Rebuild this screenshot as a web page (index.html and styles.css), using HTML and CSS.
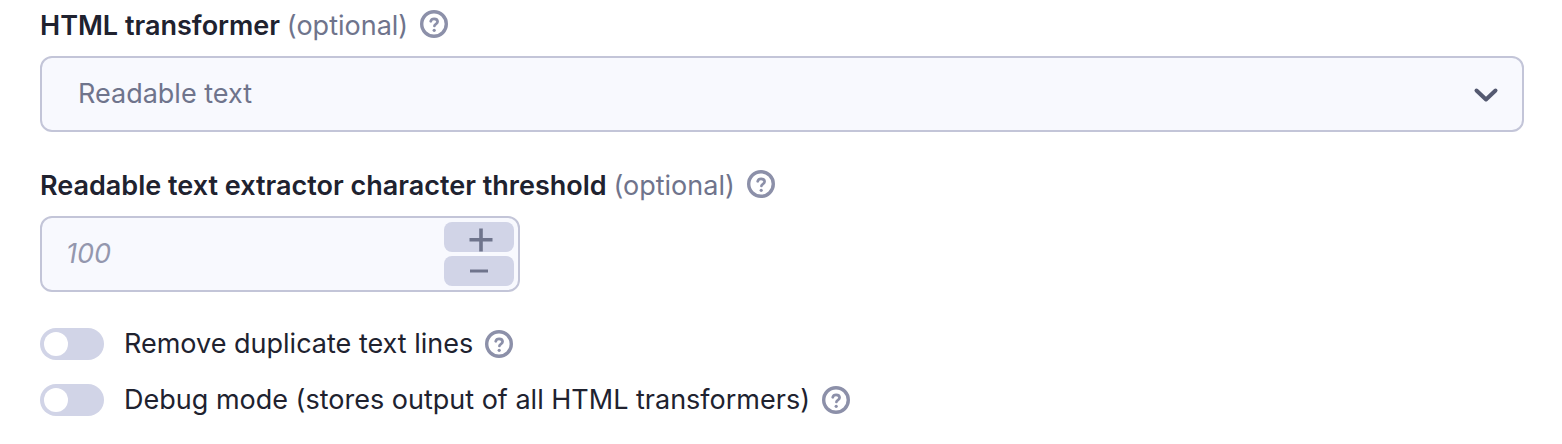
FILE: index.html
```html
<!DOCTYPE html>
<html lang="en">
<head>
    <meta charset="UTF-8">
    <meta name="viewport" content="width=device-width, initial-scale=1.0">
    <title>HTML transformer settings</title>
    <link rel="stylesheet" href="styles.css">
</head>
<body>

    <svg class="sprite" aria-hidden="true">
        <symbol id="help" viewBox="0 0 28 28">
            <circle cx="14" cy="14" r="12.3" fill="none" stroke="currentColor" stroke-width="3.4"/>
            <path d="M10.7 11.3c.4-1.5 1.7-2.4 3.4-2.4 2 0 3.5 1.2 3.5 2.9 0 2.3-3.2 2.3-3.2 4.2" fill="none" stroke="currentColor" stroke-width="2.7" stroke-linecap="round"/>
            <circle cx="14.2" cy="20.3" r="1.6" fill="currentColor"/>
        </symbol>
    </svg>

    <form class="settings">
        <div class="field">
            <div class="field-label">
                <label for="transformer">HTML transformer <span class="optional">(optional)</span></label>
                <button type="button" class="help" aria-label="About HTML transformer"><svg><use href="#help"/></svg></button>
            </div>
            <div class="select-wrap">
                <select id="transformer" name="transformer">
                    <option>Readable text</option>
                </select>
                <svg class="chevron" viewBox="0 0 26 16" aria-hidden="true"><path d="M3.5 3.5l9.5 9 9.5-9"/></svg>
            </div>
        </div>

        <div class="field">
            <div class="field-label">
                <label for="threshold">Readable text extractor character threshold <span class="optional">(optional)</span></label>
                <button type="button" class="help" aria-label="About character threshold"><svg><use href="#help"/></svg></button>
            </div>
            <div class="number">
                <input type="text" inputmode="numeric" id="threshold" name="threshold" placeholder="100">
                <div class="steps">
                    <button type="button" aria-label="Increase"><svg viewBox="0 0 30 30"><path d="M5.5 17.8h23M17 6.5v23"/></svg></button>
                    <button type="button" aria-label="Decrease"><svg viewBox="0 0 30 30"><path d="M6 15h18"/></svg></button>
                </div>
            </div>
        </div>

        <div class="toggle">
            <input type="checkbox" id="duplicates" name="duplicates">
            <label for="duplicates">Remove duplicate text lines</label>
            <button type="button" class="help" aria-label="About duplicate text lines"><svg><use href="#help"/></svg></button>
        </div>
        <div class="toggle">
            <input type="checkbox" id="debug" name="debug">
            <label for="debug">Debug mode (stores output of all HTML transformers)</label>
            <button type="button" class="help" aria-label="About debug mode"><svg><use href="#help"/></svg></button>
        </div>
    </form>

</body>
</html>
```

FILE: styles.css
```css
* {
    box-sizing: border-box;
}

body {
    margin: 0;
    background-color: #fff;
    color: #20222f;
    font-family: Inter, sans-serif;
    font-size: 27px;
    line-height: 32px;
}

button,
input,
select {
    margin: 0;
    font: inherit;
}

.sprite {
    position: absolute;
    width: 0;
    height: 0;
}

.settings {
    padding: 8px 38px 20px 40px;
}

.field {
    margin-bottom: 36px;
}

.field-label {
    display: flex;
    align-items: flex-start;
    gap: 12px;
    padding-top: 2px;
    margin-bottom: 14px;
}

.field-label label {
    font-weight: 600;
}

.optional {
    color: #6f748c;
    font-weight: 400;
}

.help {
    width: 28px;
    height: 28px;
    padding: 0;
    border: none;
    background: none;
    color: #8c90a9;
    cursor: pointer;
}

.help svg {
    display: block;
    width: 28px;
    height: 28px;
}

.select-wrap {
    position: relative;
}

select,
.number {
    height: 76px;
    border: 2px solid #c3c5d8;
    border-radius: 12px;
    background-color: #f8f9fe;
}

select {
    display: block;
    width: 100%;
    padding: 0 36px;
    color: #6f748c;
    appearance: none;
}

.chevron {
    position: absolute;
    top: 31px;
    right: 25px;
    width: 26px;
    height: 16px;
    fill: none;
    stroke: #555a71;
    stroke-width: 4;
    stroke-linecap: round;
    stroke-linejoin: round;
    pointer-events: none;
}

.number {
    display: flex;
    width: 480px;
    max-width: 100%;
    padding: 4px;
}

.number input {
    flex: 1;
    min-width: 0;
    padding: 0 20px;
    border: none;
    background: none;
}

.number input::placeholder {
    color: #9497ae;
    font-style: italic;
}

.steps {
    display: flex;
    flex-direction: column;
    gap: 4px;
    width: 70px;
}

.steps button {
    display: flex;
    flex: 1;
    align-items: center;
    justify-content: center;
    padding: 0;
    border: none;
    border-radius: 8px;
    background-color: #d1d4e7;
}

.steps svg {
    width: 30px;
    height: 30px;
    stroke: #6f748c;
    stroke-width: 3.6;
}

.steps button:last-child svg {
    stroke-width: 3;
}

.toggle {
    display: flex;
    align-items: center;
    height: 32px;
    margin-bottom: 24px;
}

.toggle input {
    display: flex;
    align-items: center;
    width: 64px;
    height: 32px;
    margin-right: 20px;
    padding: 4px;
    border-radius: 16px;
    background-color: #d1d4e7;
    appearance: none;
}

.toggle input::before {
    width: 24px;
    height: 24px;
    border-radius: 50%;
    background-color: #fff;
    content: "";
}

.toggle input:checked {
    justify-content: flex-end;
    background-color: #555a71;
}

.toggle label {
    margin-right: 12px;
}
```
